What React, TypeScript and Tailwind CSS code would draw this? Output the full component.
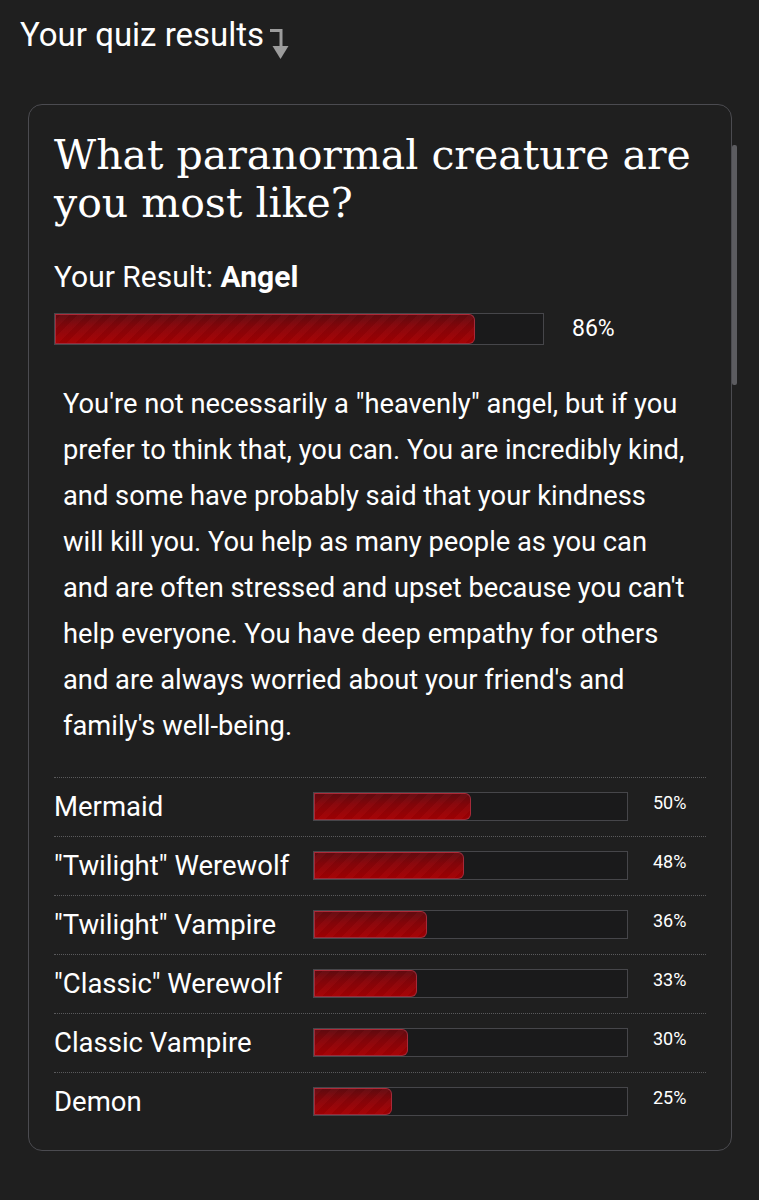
import React from 'react'

const others = [
  { name: 'Mermaid', pct: 50 },
  { name: '"Twilight" Werewolf', pct: 48 },
  { name: '"Twilight" Vampire', pct: 36 },
  { name: '"Classic" Werewolf', pct: 33 },
  { name: 'Classic Vampire', pct: 30 },
  { name: 'Demon', pct: 25 },
]

const lines = [
  'You\'re not necessarily a "heavenly" angel, but if you',
  'prefer to think that, you can. You are incredibly kind,',
  'and some have probably said that your kindness',
  'will kill you. You help as many people as you can',
  "and are often stressed and upset because you can't",
  'help everyone. You have deep empathy for others',
  "and are always worried about your friend's and",
  "family's well-being.",
]

function Bar({ pct, className }: { pct: number; className: string }) {
  return (
    <div className={`relative border border-[#46464a] bg-[#1a1a1b] ${className}`}>
      <div
        className="h-full rounded-r-[6px] border border-[#b03a4e]/70 bg-[linear-gradient(180deg,#650b10_0%,#88050a_40%,#a60002_100%)]"
        style={{ width: `${pct}%` }}
      >
        <div className="h-full w-full bg-[repeating-linear-gradient(-45deg,rgba(0,0,0,0.05)_0px,rgba(0,0,0,0.05)_6px,rgba(255,255,255,0.015)_6px,rgba(255,255,255,0.015)_12px)]" />
      </div>
    </div>
  )
}

export default function App() {
  return (
    <div className="min-h-[1200px] bg-[#1f1f1f] font-['Roboto',sans-serif] text-white">
      {/* header */}
      <div className="flex items-start px-5 pt-[15px]">
        <h2 className="text-[33px] leading-[40px]">Your quiz results</h2>
        <svg width="20" height="36" viewBox="0 0 20 36" className="ml-[5px] mt-[11px]">
          <path d="M1 4.5H12V22" stroke="#9c9c9c" strokeWidth="3" fill="none" />
          <path d="M3.5 20H19.5L11.5 33Z" fill="#9c9c9c" />
        </svg>
      </div>

      {/* card */}
      <div className="relative mx-[28px] mt-[42px] w-[704px] rounded-[14px] border border-[#4b4b50] px-[25px] pb-[19px] pt-[26px]">
        <div className="absolute right-[-6px] top-[40px] h-[240px] w-[5px] rounded-[2px] bg-[#5c5c60]" />

        <h1 className="font-['DejaVu_Serif',serif] text-[41px] leading-[48px]">
          What paranormal creature are you most like?
        </h1>

        <p className="mt-[32px] text-[30px] leading-[36px]">
          Your Result: <b>Angel</b>
        </p>

        <div className="mt-[17px] flex items-center">
          <Bar pct={86} className="h-[32px] w-[490px]" />
          <span className="ml-[28px] text-[23px]">86%</span>
        </div>

        <p className="mt-[34px] whitespace-nowrap px-[9px] text-[27.3px] leading-[46px]">
          {lines.map((l, i) => (
            <span key={i} className="block">
              {l}
            </span>
          ))}
        </p>

        <div className="mt-[28px]">
          {others.map((o) => (
            <div key={o.name} className="flex h-[59px] items-center border-t border-dotted border-[#5a5a5c]">
              <span className="w-[259px] text-[27.5px]">{o.name}</span>
              <Bar pct={o.pct} className="h-[29px] w-[315px]" />
              <span className="mb-[8px] ml-[25px] text-[18px]">{o.pct}%</span>
            </div>
          ))}
        </div>
      </div>
    </div>
  )
}
